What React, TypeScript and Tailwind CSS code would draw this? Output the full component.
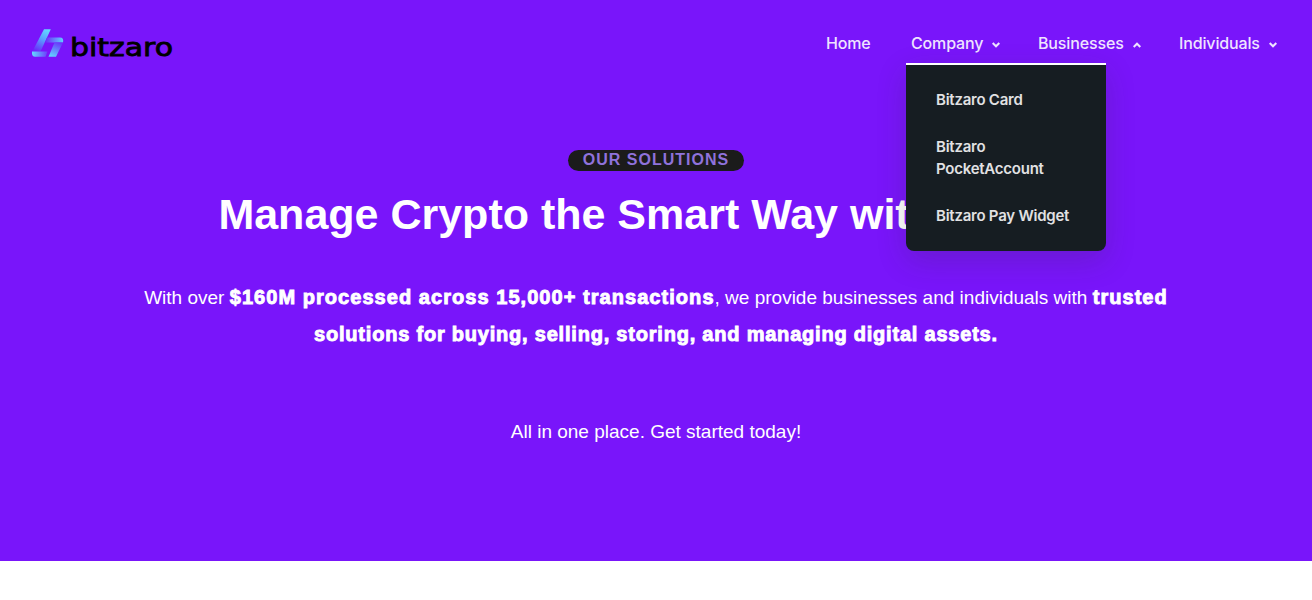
import { clsx } from "clsx";

const NAV_ITEMS = [
  { label: "Home", width: "w-[47px]" },
  { label: "Company", width: "w-[89px]", caret: "down" },
  { label: "Businesses", width: "w-[103px]", caret: "up" },
  { label: "Individuals", width: "w-[98px]", caret: "down" },
];

const BUSINESS_LINKS = ["Bitzaro Card", "Bitzaro PocketAccount", "Bitzaro Pay Widget"];

function Logo() {
  return (
    <a href="#" aria-label="Bitzaro" className="mt-[29px] flex h-7 w-[141px] items-start">
      <svg viewBox="0 0 32 28" className="h-7 w-8 shrink-0">
        <defs>
          <linearGradient id="stem" x1="0.7" y1="0" x2="0.3" y2="1">
            <stop offset="0" stopColor="#63d8ff" />
            <stop offset="0.45" stopColor="#599dff" />
            <stop offset="1" stopColor="#6d27fa" />
          </linearGradient>
          <linearGradient id="arm" x1="0" y1="0" x2="1" y2="0">
            <stop offset="0" stopColor="#7027fa" />
            <stop offset="1" stopColor="#60cfff" />
          </linearGradient>
          <linearGradient id="foot" x1="0" y1="0" x2="1" y2="0">
            <stop offset="0" stopColor="#62dcff" />
            <stop offset="1" stopColor="#6d3cfc" />
          </linearGradient>
          <linearGradient id="leg" x1="0.7" y1="0" x2="0.3" y2="1">
            <stop offset="0" stopColor="#6a35fb" />
            <stop offset="1" stopColor="#62d0ff" />
          </linearGradient>
        </defs>
        <path d="M12 0.2H18.8L8.5 22.5H0.3Z" fill="url(#stem)" />
        <path d="M15 8.5H28Q32 8.5 31 13.5H13Z" fill="url(#arm)" />
        <path d="M0 22.5H15.5L13.5 27.8H3Q-0.5 27.8 0 22.5Z" fill="url(#foot)" />
        <path d="M22.5 13.5H31L24 27.8H16.5Z" fill="url(#leg)" />
      </svg>
      <svg viewBox="0 0 103 28" className="ml-1.5 h-7 w-[103px] overflow-visible">
        <text
          x="0"
          y="27"
          textLength="103"
          lengthAdjust="spacingAndGlyphs"
          className="fill-black stroke-black stroke-[0.8px] font-['DejaVu_Sans'] text-[24px]"
        >
          bitzaro
        </text>
      </svg>
    </a>
  );
}

function Caret({ up }: { up: boolean }) {
  return (
    <svg
      viewBox="0 0 8 6"
      className={clsx("mt-1 h-1.5 w-2", up && "rotate-180")}
      fill="none"
      stroke="currentColor"
      strokeWidth="2"
    >
      <path d="M0.7 1L4 4.3L7.3 1" />
    </svg>
  );
}

function BusinessMenu() {
  return (
    <ul className="absolute top-[63px] left-[906px] z-10 flex h-[188px] w-[200px] flex-col gap-[25px] rounded-b-lg border-t-2 border-white bg-[#161d22] px-[30px] pt-6 font-['Inter',sans-serif] text-[15px] leading-[22px] font-semibold tracking-[-0.24px] text-[#e1e1e3] shadow-[0_10px_30px_rgba(45,45,45,0.2)]">
      {BUSINESS_LINKS.map((link) => (
        <li key={link}>
          <a href="#">{link}</a>
        </li>
      ))}
    </ul>
  );
}

export default function App() {
  return (
    <div className="relative min-h-[600px] bg-white font-['Liberation_Sans',Arial,sans-serif]">
      <div className="h-[561px] bg-[#7915fa] text-white">
        <header className="flex h-[87px] justify-between pr-[35px] pl-8">
          <Logo />
          <nav className="mt-[31px] flex h-6 gap-[38px] font-['Inter',sans-serif] text-base font-medium tracking-[-0.14px] text-[#efe4ff]">
            {NAV_ITEMS.map((item) => (
              <a
                key={item.label}
                href="#"
                className={clsx("flex items-center justify-between whitespace-nowrap", item.width)}
              >
                {item.label}
                {item.caret && <Caret up={item.caret === "up"} />}
              </a>
            ))}
          </nav>
        </header>

        <section className="flex flex-col items-center pt-[63px] text-center">
          <span className="flex h-[21px] w-44 items-start justify-center rounded-full bg-[#1b1b1b] text-base leading-5 font-bold tracking-[1px] text-[#8f72dc]">
            OUR SOLUTIONS
          </span>
          <h1 className="mt-[17px] text-[43px] leading-[53px] font-bold whitespace-nowrap">
            Manage Crypto the Smart Way with Bitzaro
          </h1>
          <p className="mt-[38px] h-[74px] text-[19px] leading-[37px] whitespace-nowrap">
            With over{" "}
            <strong className="text-xl leading-none tracking-[1.05px] [-webkit-text-stroke:0.9px_white]">
              $160M processed across 15,000+ transactions
            </strong>
            , we provide businesses and individuals with{" "}
            <strong className="text-xl leading-none tracking-[1.05px] [-webkit-text-stroke:0.9px_white]">
              trusted
            </strong>
            <br />
            <strong className="text-xl leading-none tracking-[0.79px] [-webkit-text-stroke:0.9px_white]">
              solutions for buying, selling, storing, and managing digital assets.
            </strong>
          </p>
          <p className="mt-[60px] text-[19px] leading-[37px]">All in one place. Get started today!</p>
        </section>
      </div>
      <BusinessMenu />
    </div>
  );
}
